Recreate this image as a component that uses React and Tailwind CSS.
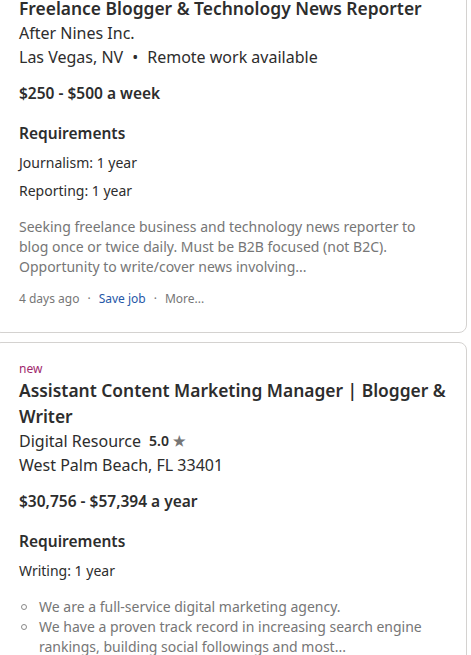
import React from 'react';

const jobs = [
  {
    id: 1,
    isNew: false,
    title: 'Freelance Blogger & Technology News Reporter',
    company: 'After Nines Inc.',
    location: 'Las Vegas, NV',
    remote: 'Remote work available',
    salary: '$250 - $500 a week',
    requirements: ['Journalism: 1 year', 'Reporting: 1 year'],
    snippet:
      'Seeking freelance business and technology news reporter to blog once or twice daily. Must be B2B focused (not B2C). Opportunity to write/cover news involving...',
    posted: '4 days ago',
  },
  {
    id: 2,
    isNew: true,
    title: 'Assistant Content Marketing Manager | Blogger & Writer',
    company: 'Digital Resource',
    rating: '5.0',
    location: 'West Palm Beach, FL 33401',
    salary: '$30,756 - $57,394 a year',
    requirements: ['Writing: 1 year'],
    bullets: [
      'We are a full-service digital marketing agency.',
      'We have a proven track record in increasing search engine rankings, building social followings and most...',
    ],
  },
];

const JobCard = ({ job, first }) => {
  return (
    <div
      className={`w-[474px] rounded-lg border border-[#d4d2d0] bg-white pl-[25px] pr-4 pb-[25px] ${
        first ? 'pt-[14px]' : 'pt-[18px] mt-[9px]'
      }`}
    >
      {job.isNew && <div className="text-[12px] leading-4 text-[#a0296e]">new</div>}

      {/* Title */}
      <h2 className="text-[17.4px] leading-[26px] font-semibold text-[#2d2d2d]">{job.title}</h2>

      <div className="text-[16px] leading-6 text-[#2d2d2d] flex items-center">
        <span>{job.company}</span>
        {job.rating && (
          <span className="ml-2 flex items-center text-[14px] font-semibold">
            {job.rating}
            <span className="ml-1 text-[14px] text-[#767676]">★</span>
          </span>
        )}
      </div>
      <div className="text-[16px] leading-6 text-[#2d2d2d]">
        {job.location}
        {job.remote && (
          <>
            <span className="mx-[9px]">•</span>
            {job.remote}
          </>
        )}
      </div>

      <div className="mt-3 text-[15.5px] leading-6 font-semibold text-[#2d2d2d]">{job.salary}</div>

      {/* Requirements */}
      <div className="mt-4 text-[15.5px] leading-6 font-semibold text-[#2d2d2d]">Requirements</div>
      {job.requirements.map((r) => (
        <div key={r} className="mt-2 text-[14px] leading-5 text-[#2d2d2d]">
          {r}
        </div>
      ))}

      {job.snippet && (
        <p className="mt-4 text-[14px] leading-5 text-[#767676] pr-5">{job.snippet}</p>
      )}

      {job.bullets && (
        <ul className="mt-4 text-[14px] leading-5 text-[#767676]">
          {job.bullets.map((b) => (
            <li key={b} className="flex">
              <span className="w-5 shrink-0 flex pt-[7px] pl-[2px]">
                <span className="block h-[6px] w-[6px] rounded-full border border-[#8a8a8a]" />
              </span>
              <span>{b}</span>
            </li>
          ))}
        </ul>
      )}

      {job.posted && (
        <div className="mt-[14px] flex items-center text-[12px] leading-4 text-[#767676]">
          <span>{job.posted}</span>
          <span className="mx-2">·</span>
          <span className="text-[#2557a7]">Save job</span>
          <span className="mx-2">·</span>
          <span>More...</span>
        </div>
      )}
    </div>
  );
};

const App = () => {
  return (
    <div
      className="min-h-screen bg-white overflow-hidden"
      style={{ fontFamily: '"Noto Sans", "Open Sans", sans-serif' }}
    >
      <div className="-mt-[20px] -ml-[7px]">
        {jobs.map((job, i) => (
          <JobCard key={job.id} job={job} first={i === 0} />
        ))}
      </div>
    </div>
  );
};

export default App;
